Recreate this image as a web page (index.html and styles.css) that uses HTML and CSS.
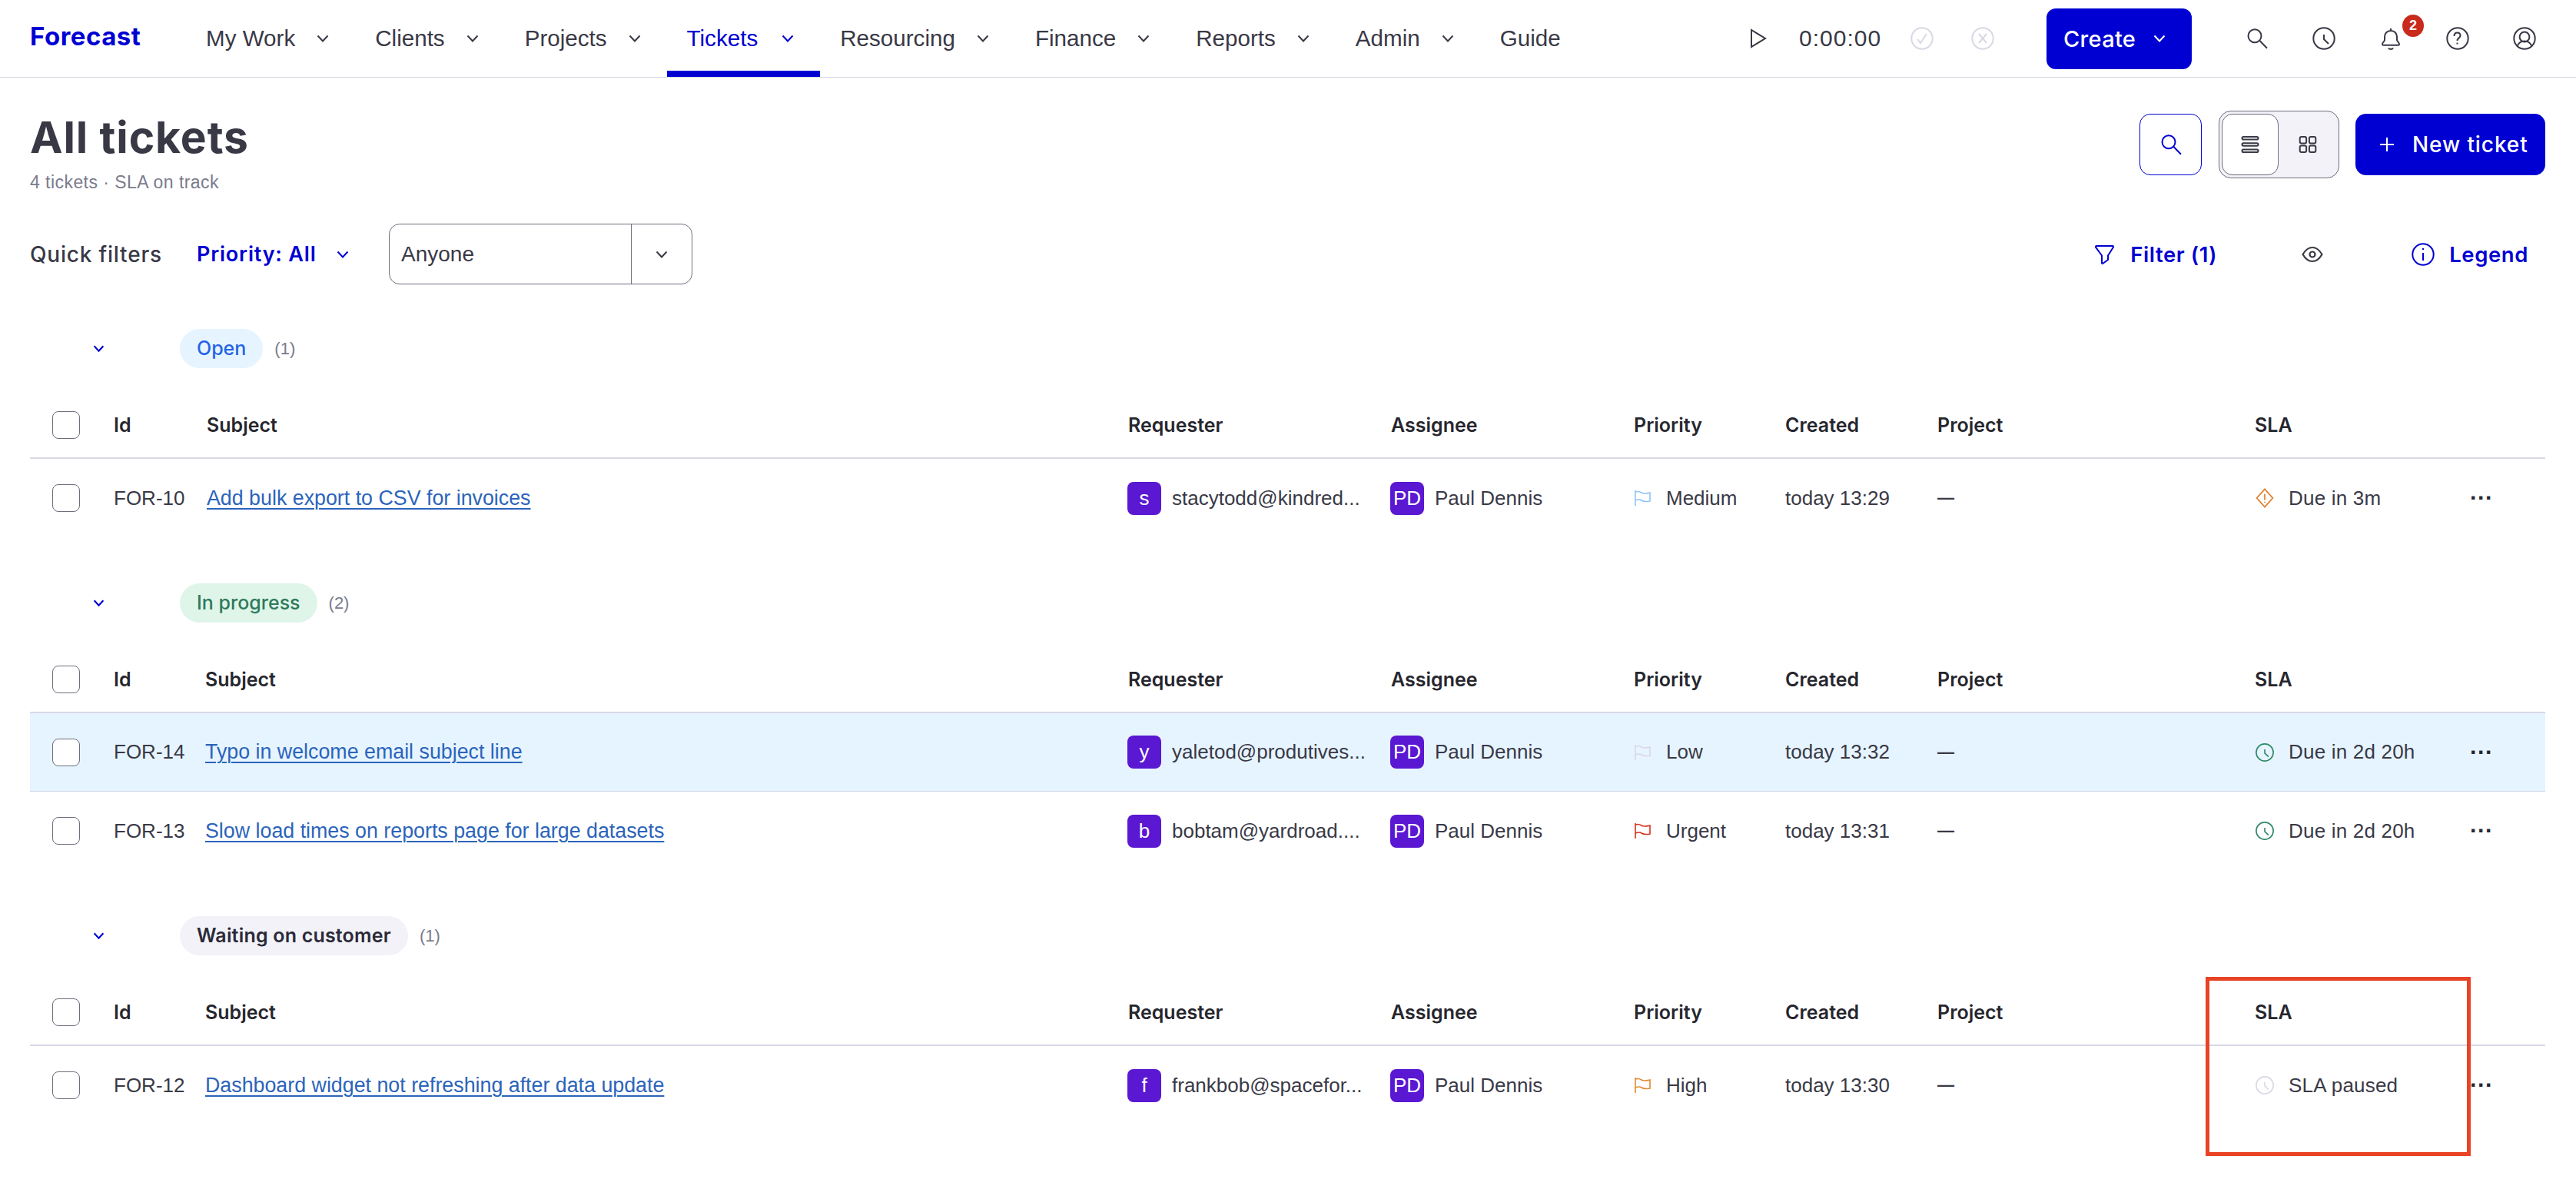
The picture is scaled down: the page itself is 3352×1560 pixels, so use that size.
FILE: index.html
```html
<!DOCTYPE html>
<html lang="en">
<head>
  <meta charset="UTF-8">
  <title>All tickets - Forecast</title>
  <link rel="stylesheet" href="styles.css">
</head>
<body>
  <svg class="sprite" width="0" height="0">
    <symbol id="i-chev" viewBox="0 0 16 10"><path d="M1.500 1.500 8 8.500l6.500-7"/></symbol>
    <symbol id="i-search" viewBox="0 0 32 32"><circle cx="13" cy="12.700" r="8.500"/><path d="M19.500 19 29 28.700"/></symbol>
    <symbol id="i-clock" viewBox="0 0 32 32"><circle cx="16" cy="16" r="13.700"/><path d="M16 11v6l6 6"/></symbol>
    <symbol id="i-bell" viewBox="0 0 32 32"><path d="M16 6c-5 0-8 3.500-8 8v4c0 2-3 3-3 5.500 0 .8.500 1.200 1.200 1.200h19.600c.7 0 1.200-.4 1.200-1.200 0-2.500-3-3.500-3-5.500v-4c0-4.500-3-8-8-8ZM16 3v3M13 28.500c1 2 5 2 6 0"/></symbol>
    <symbol id="i-help" viewBox="0 0 32 32"><circle cx="16" cy="16" r="13.700"/><path d="M11.500 13c0-2.500 1.500-4.500 4-4.500s4 1.700 4 3.800c0 3.200-4 3-4 6.700M15.500 21.500v2"/></symbol>
    <symbol id="i-user" viewBox="0 0 32 32"><circle cx="16" cy="16" r="13.700"/><circle cx="16" cy="14" r="6.400"/><path d="M6.500 26c2-4.500 5-6.500 9.500-6.500s7.500 2 9.500 6.500"/></symbol>
    <symbol id="i-play" viewBox="0 0 22 26"><path d="M2 2v22l18-11Z"/></symbol>
    <symbol id="i-check" viewBox="0 0 32 32"><circle cx="16" cy="16" r="13.700"/><path d="m10 17 4 5 8-12"/></symbol>
    <symbol id="i-cross" viewBox="0 0 32 32"><circle cx="16" cy="16" r="13.700"/><path d="m11 10 10 12M21 10 11 22"/></symbol>
    <symbol id="i-list" viewBox="0 0 24 24"><rect x="1.500" y="2" width="21" height="3.600" rx="1.800"/><rect x="1.500" y="10.200" width="21" height="3.600" rx="1.800"/><rect x="1.500" y="18.400" width="21" height="3.600" rx="1.800"/></symbol>
    <symbol id="i-grid" viewBox="0 0 24 24"><rect x="1.700" y="2" width="8.400" height="8.400" rx="2"/><rect x="13.900" y="2" width="8.400" height="8.400" rx="2"/><rect x="1.700" y="13.600" width="8.400" height="8.400" rx="2"/><rect x="13.900" y="13.600" width="8.400" height="8.400" rx="2"/></symbol>
    <symbol id="i-plus" viewBox="0 0 20 20"><path d="M10 1v18M1 10h18"/></symbol>
    <symbol id="i-filter" viewBox="0 0 27 26"><path d="M3 2h21c1 0 1.400 1 .8 1.800L18 14.500V20l-6.600 4.800c-.6.4-1.400 0-1.400-.8v-9.500L2.200 3.800C1.600 3 2 2 3 2Z"/></symbol>
    <symbol id="i-eye" viewBox="0 0 28 28"><path d="M1.500 14C5 8 9 5 14 5s9 3 12.500 9C23 20 19 23 14 23S5 20 1.500 14Z"/><circle cx="14" cy="14" r="3.500"/></symbol>
    <symbol id="i-info" viewBox="0 0 32 32"><circle cx="16" cy="16" r="13.700"/><path d="M16 14v10M16 8v2"/></symbol>
    <symbol id="i-flag" viewBox="0 0 24 22"><path d="M2 1v20M2 3c3-1 5-1 8 1s6 1 11 0v11c-5 1-8 1-11-1s-5-1-8 0"/></symbol>
    <symbol id="i-warn" viewBox="0 0 28 30"><path d="M14 1.500 26 15 14 28.500 2 15Z"/><path d="M14 9v9M14 20.500v1.500"/></symbol>
  </svg>

  <header class="topbar">
    <a class="logo">Forecast</a>
    <nav class="nav">
      <a class="nav-item nav-item-1">My Work <svg class="chev"><use href="#i-chev"/></svg></a>
      <a class="nav-item">Clients <svg class="chev"><use href="#i-chev"/></svg></a>
      <a class="nav-item">Projects <svg class="chev"><use href="#i-chev"/></svg></a>
      <a class="nav-item active">Tickets <svg class="chev"><use href="#i-chev"/></svg></a>
      <a class="nav-item">Resourcing <svg class="chev"><use href="#i-chev"/></svg></a>
      <a class="nav-item">Finance <svg class="chev"><use href="#i-chev"/></svg></a>
      <a class="nav-item">Reports <svg class="chev"><use href="#i-chev"/></svg></a>
      <a class="nav-item">Admin <svg class="chev"><use href="#i-chev"/></svg></a>
      <a class="nav-item">Guide</a>
    </nav>
    <div class="timer">
      <svg class="ico-play"><use href="#i-play"/></svg>
      <span class="timer-val">0:00:00</span>
      <svg class="ico-32 muted"><use href="#i-check"/></svg>
      <svg class="ico-32 muted"><use href="#i-cross"/></svg>
    </div>
    <button class="create-btn">Create <svg class="chev"><use href="#i-chev"/></svg></button>
    <div class="top-icons">
      <svg class="ico-32"><use href="#i-search"/></svg>
      <svg class="ico-32"><use href="#i-clock"/></svg>
      <span class="bell">
        <svg class="ico-32"><use href="#i-bell"/></svg>
        <span class="badge">2</span>
      </span>
      <svg class="ico-32"><use href="#i-help"/></svg>
      <svg class="ico-32"><use href="#i-user"/></svg>
    </div>
  </header>

  <main class="page">
    <div class="page-head">
      <div>
        <h1>All tickets</h1>
        <p class="subtitle">4 tickets · SLA on track</p>
      </div>
      <div class="head-actions">
        <button class="search-btn"><svg class="ico-32"><use href="#i-search"/></svg></button>
        <div class="view-toggle">
          <span class="view-opt selected"><svg class="ico-24"><use href="#i-list"/></svg></span>
          <span class="view-opt"><svg class="ico-24"><use href="#i-grid"/></svg></span>
        </div>
        <button class="new-btn"><svg class="ico-plus"><use href="#i-plus"/></svg> New ticket</button>
      </div>
    </div>

    <div class="filters">
      <span class="filters-label">Quick filters</span>
      <a class="priority-filter">Priority: All <svg class="chev"><use href="#i-chev"/></svg></a>
      <div class="select">
        <span class="select-value">Anyone</span>
        <span class="select-arrow"><svg class="chev"><use href="#i-chev"/></svg></span>
      </div>
      <div class="filters-right">
        <a class="link-btn filter-link"><svg class="ico-filter"><use href="#i-filter"/></svg> Filter (1)</a>
        <svg class="ico-eye"><use href="#i-eye"/></svg>
        <a class="link-btn"><svg class="ico-32"><use href="#i-info"/></svg> Legend</a>
      </div>
    </div>

    <section class="group group-first">
      <div class="group-head">
        <svg class="chev small"><use href="#i-chev"/></svg>
        <span class="pill pill-open">Open</span>
        <span class="count">(1)</span>
      </div>
      <div class="row row-head">
        <span class="checkbox"></span><span>Id</span><span>Subject</span><span>Requester</span><span>Assignee</span><span>Priority</span><span>Created</span><span>Project</span><span>SLA</span>
      </div>
      <div class="row">
        <span class="checkbox"></span><span>FOR-10</span>
        <a class="subject">Add bulk export to CSV for invoices</a>
        <span class="person"><span class="avatar">s</span>stacytodd@kindred...</span>
        <span class="person"><span class="avatar">PD</span>Paul Dennis</span>
        <span class="cell-icon"><svg class="ico-flag flag-medium"><use href="#i-flag"/></svg>Medium</span>
        <span>today 13:29</span><span class="dash">—</span>
        <span class="cell-sla"><svg class="ico-sla sla-warn"><use href="#i-warn"/></svg>Due in 3m</span>
        <span class="more">···</span>
      </div>
    </section>

    <section class="group">
      <div class="group-head">
        <svg class="chev small"><use href="#i-chev"/></svg>
        <span class="pill pill-progress">In progress</span>
        <span class="count">(2)</span>
      </div>
      <div class="row row-head">
        <span class="checkbox"></span><span>Id</span><span>Subject</span><span>Requester</span><span>Assignee</span><span>Priority</span><span>Created</span><span>Project</span><span>SLA</span>
      </div>
      <div class="row row-hl">
        <span class="checkbox"></span><span>FOR-14</span>
        <a class="subject">Typo in welcome email subject line</a>
        <span class="person"><span class="avatar">y</span>yaletod@produtives...</span>
        <span class="person"><span class="avatar">PD</span>Paul Dennis</span>
        <span class="cell-icon"><svg class="ico-flag flag-low"><use href="#i-flag"/></svg>Low</span>
        <span>today 13:32</span><span class="dash">—</span>
        <span class="cell-sla"><svg class="ico-sla sla-ok"><use href="#i-clock"/></svg>Due in 2d 20h</span>
        <span class="more">···</span>
      </div>
      <div class="row">
        <span class="checkbox"></span><span>FOR-13</span>
        <a class="subject">Slow load times on reports page for large datasets</a>
        <span class="person"><span class="avatar">b</span>bobtam@yardroad....</span>
        <span class="person"><span class="avatar">PD</span>Paul Dennis</span>
        <span class="cell-icon"><svg class="ico-flag flag-urgent"><use href="#i-flag"/></svg>Urgent</span>
        <span>today 13:31</span><span class="dash">—</span>
        <span class="cell-sla"><svg class="ico-sla sla-ok"><use href="#i-clock"/></svg>Due in 2d 20h</span>
        <span class="more">···</span>
      </div>
    </section>

    <section class="group">
      <div class="group-head">
        <svg class="chev small"><use href="#i-chev"/></svg>
        <span class="pill pill-waiting">Waiting on customer</span>
        <span class="count">(1)</span>
      </div>
      <div class="row row-head">
        <span class="checkbox"></span><span>Id</span><span>Subject</span><span>Requester</span><span>Assignee</span><span>Priority</span><span>Created</span><span>Project</span><span>SLA</span>
      </div>
      <div class="row">
        <span class="checkbox"></span><span>FOR-12</span>
        <a class="subject">Dashboard widget not refreshing after data update</a>
        <span class="person"><span class="avatar">f</span>frankbob@spacefor...</span>
        <span class="person"><span class="avatar">PD</span>Paul Dennis</span>
        <span class="cell-icon"><svg class="ico-flag flag-high"><use href="#i-flag"/></svg>High</span>
        <span>today 13:30</span><span class="dash">—</span>
        <span class="cell-sla"><svg class="ico-sla sla-paused"><use href="#i-clock"/></svg>SLA paused</span>
        <span class="more">···</span>
      </div>
    </section>
  </main>

  <div class="callout"></div>
</body>
</html>
```

FILE: styles.css
```css
* {
  margin: 0;
  padding: 0;
  box-sizing: border-box;
}

html, body {
  height: 100%;
}

body {
  position: relative;
  font-family: "Liberation Sans", Arial, sans-serif;
  font-size: 26px;
  color: #393946;
  background: #fff;
  overflow: hidden;
}

button {
  font: inherit;
  border: none;
  cursor: pointer;
}

svg {
  fill: none;
  stroke: currentColor;
  stroke-width: 2;
  flex: none;
}

.sprite {
  position: absolute;
}

.chev {
  width: 16px;
  height: 10px;
}

.chev.small {
  width: 15px;
  height: 9px;
  color: #0000d2;
  stroke-width: 2.4;
}

.ico-32 { width: 32px; height: 32px; }
.ico-24 { width: 24px; height: 24px; }

/* top bar */
.topbar {
  display: flex;
  align-items: center;
  height: 101px;
  padding-left: 39px;
  border-bottom: 1px solid #d5d4e2;
}

.logo {
  width: 216px;
  margin-top: -7px;
  font-family: Inter, sans-serif;
  font-size: 33px;
  font-weight: 700;
  letter-spacing: 0.5px;
  color: #0000d2;
}

.nav {
  display: flex;
  align-self: stretch;
  width: 2022px;
}

.nav-item {
  display: flex;
  align-items: center;
  gap: 28px;
  padding: 8px 34px 0 26px;
  font-size: 29.6px;
  white-space: nowrap;
  border-bottom: 8px solid transparent;
}

.nav-item-1 {
  padding-left: 13px;
}

.nav-item.active {
  gap: 31px;
  color: #0000d2;
  border-bottom-color: #0000d2;
}

.timer {
  display: flex;
  align-items: center;
  width: 386px;
}

.ico-play {
  width: 22px;
  height: 26px;
  margin-right: 42px;
}

.timer-val {
  width: 105px;
  margin-right: 39px;
  font-size: 30px;
  letter-spacing: 1px;
  white-space: nowrap;
}

.muted {
  margin-right: 47px;
  color: #d9d8e4;
}

.create-btn {
  display: flex;
  align-items: center;
  gap: 23px;
  width: 189px;
  height: 79px;
  padding-left: 22px;
  font-family: Inter, sans-serif;
  font-size: 29px;
  font-weight: 500;
  letter-spacing: 0.3px;
  color: #fff;
  background: #0000d2;
  border-radius: 12px;
}

.top-icons {
  display: flex;
  align-items: center;
  gap: 55px;
  margin-left: 69px;
}

.bell {
  position: relative;
  display: flex;
}

.badge {
  position: absolute;
  top: -15px;
  left: 31px;
  width: 28px;
  height: 29px;
  font-size: 18px;
  font-weight: 700;
  line-height: 29px;
  text-align: center;
  color: #fff;
  background: #c92a1c;
  border-radius: 50%;
}

/* page */
.page {
  padding: 43px 40px 0 39px;
}

.page-head {
  display: flex;
  justify-content: space-between;
  height: 108px;
}

h1 {
  font-family: Inter, sans-serif;
  font-size: 57px;
  font-weight: 700;
  line-height: 70px;
  letter-spacing: 0.9px;
}

.subtitle {
  margin-top: 8px;
  font-size: 23px;
  line-height: 30px;
  letter-spacing: 0.45px;
  color: #7b7b8c;
}

.head-actions {
  display: flex;
  align-items: center;
  height: 88px;
}

.search-btn {
  display: flex;
  align-items: center;
  justify-content: center;
  width: 81px;
  height: 80px;
  margin-right: 22px;
  color: #0000d2;
  background: #fff;
  border: 1px solid #0000d2;
  border-radius: 14px;
}

.view-toggle {
  display: flex;
  align-items: center;
  width: 157px;
  height: 88px;
  padding: 3px;
  margin-right: 21px;
  background: #f3f2f9;
  border: 1px solid #6e6d7c;
  border-radius: 16px;
}

.view-opt {
  display: flex;
  align-items: center;
  justify-content: center;
  flex: 1;
  height: 80px;
}

.view-opt.selected {
  flex: none;
  width: 74px;
  background: #fff;
  border: 1px solid #6e6d7c;
  border-radius: 14px;
}

.new-btn {
  display: flex;
  align-items: center;
  gap: 23px;
  width: 247px;
  height: 80px;
  padding-left: 31px;
  font-family: Inter, sans-serif;
  font-size: 28px;
  font-weight: 500;
  letter-spacing: 0.9px;
  color: #fff;
  background: #0000d2;
  border-radius: 14px;
  white-space: nowrap;
}

.ico-plus {
  width: 20px;
  height: 20px;
}

/* filters */
.filters {
  display: flex;
  align-items: center;
  height: 79px;
  margin-top: 39px;
}

.filters-label {
  width: 217px;
  font-family: Inter, sans-serif;
  font-size: 28px;
  font-weight: 500;
  letter-spacing: 0.8px;
}

.priority-filter {
  display: flex;
  align-items: center;
  gap: 26px;
  width: 250px;
  font-family: Inter, sans-serif;
  font-size: 27px;
  font-weight: 600;
  letter-spacing: 0.8px;
  color: #0000d2;
  white-space: nowrap;
}

.select {
  display: flex;
  width: 395px;
  height: 79px;
  font-size: 28px;
  border: 1px solid #6e6d7c;
  border-radius: 14px;
}

.select-value {
  display: flex;
  align-items: center;
  flex: 1;
  padding-left: 15px;
  border-right: 1px solid #6e6d7c;
}

.select-arrow {
  display: flex;
  align-items: center;
  justify-content: center;
  width: 78px;
}

.filters-right {
  display: flex;
  align-items: center;
  margin-left: auto;
  padding-right: 22px;
}

.link-btn {
  display: flex;
  align-items: center;
  gap: 18px;
  font-family: Inter, sans-serif;
  font-size: 27.5px;
  font-weight: 600;
  letter-spacing: 0.6px;
  color: #0000d2;
  white-space: nowrap;
}

.filter-link {
  gap: 20px;
}

.ico-filter {
  width: 27px;
  height: 26px;
}

.ico-eye {
  width: 28px;
  height: 28px;
  margin: 0 114px 0 110px;
  stroke-width: 2.2;
}

/* ticket groups */
.group {
  margin-top: 60px;
}

.group-first {
  margin-top: 58px;
}

.group-head {
  display: flex;
  align-items: center;
  height: 51px;
  padding-left: 82px;
}

.pill {
  margin-left: 98px;
  padding: 0 22px;
  font-family: Inter, sans-serif;
  font-size: 25px;
  font-weight: 500;
  line-height: 51px;
  border-radius: 26px;
}

.pill-open {
  color: #2463e6;
  background: #e6f4ff;
}

.pill-progress {
  color: #2f7a5a;
  background: #dff5ea;
}

.pill-waiting {
  font-weight: 600;
  letter-spacing: 0.2px;
  color: #2a2a38;
  background: #f3f2f9;
}

.count {
  margin-left: 15px;
  font-size: 22px;
  color: #7b7b8c;
}

.row {
  display: grid;
  grid-template-columns: 109px 119px 1201px 342px 316px 197px 198px 413px 280px 98px;
  align-items: center;
  height: 102px;
  white-space: nowrap;
}

.group-first .row {
  grid-template-columns: 109px 121px 1199px 342px 316px 197px 198px 413px 280px 98px;
}

.row-head {
  height: 86px;
  margin-top: 32px;
  font-family: Inter, sans-serif;
  font-size: 25px;
  font-weight: 600;
  color: #26262e;
  border-bottom: 2px solid #d9d8e4;
}

.row-hl {
  background: #e6f4ff;
  border-bottom: 1px solid #cdd8e6;
}

.checkbox {
  display: block;
  width: 36px;
  height: 36px;
  margin-left: 29px;
  background: #fff;
  border: 1px solid #6e6d7c;
  border-radius: 8px;
}

.subject {
  font-size: 26.8px;
  color: #2b64bb;
  text-decoration: underline;
  text-decoration-thickness: 2px;
  text-underline-offset: 4px;
}

.person {
  display: flex;
  align-items: center;
  gap: 14px;
}

.avatar {
  display: flex;
  align-items: center;
  justify-content: center;
  width: 44px;
  height: 43px;
  margin-left: -1px;
  font-size: 26px;
  color: #fff;
  background: #5a18d2;
  border-radius: 8px;
}

.cell-icon {
  display: flex;
  align-items: center;
  gap: 18px;
}

.cell-sla {
  display: flex;
  align-items: center;
  gap: 18px;
  letter-spacing: 0.2px;
}

.dash {
  font-size: 22px;
  font-weight: 700;
}

.ico-flag {
  width: 24px;
  height: 22px;
  stroke-width: 1.6;
}

.flag-medium { color: #8fc4f5; }
.flag-low { color: #d9d8e4; }
.flag-urgent { color: #d5301e; }
.flag-high { color: #e08a32; }

.ico-sla {
  width: 26px;
  height: 26px;
  stroke-width: 2;
}

.sla-warn { color: #e0822e; }
.sla-ok { color: #2f8a68; }
.sla-paused { color: #d9d8e4; }

.more {
  font-size: 30px;
  font-weight: 700;
  line-height: 1;
  color: #26262e;
}

/* red annotation box from the screenshot */
.callout {
  position: absolute;
  left: 2870px;
  top: 1271px;
  width: 345px;
  height: 233px;
  border: 5px solid #e84325;
}
```
